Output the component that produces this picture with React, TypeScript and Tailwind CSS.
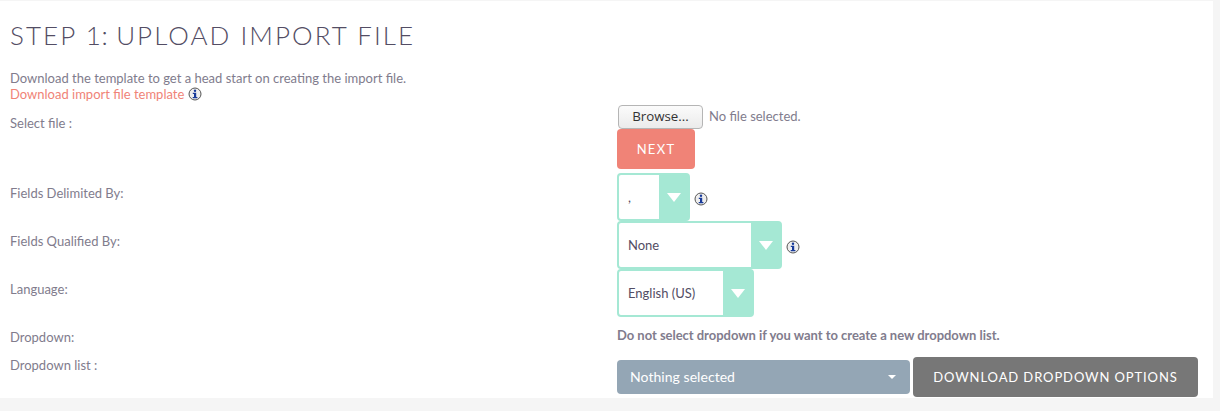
const InfoIcon = () => (
  <svg width="14" height="14" viewBox="0 0 14 14" className="shrink-0">
    <circle cx="7" cy="7" r="6" fill="#eeeeee" stroke="#555" strokeWidth="1" />
    <circle cx="7" cy="3.8" r="1.2" fill="#173a9a" />
    <path d="M4.8 5.8h3.4v4.2h1.2v1.3H4.7V10h1.3V7.1H4.8z" fill="#173a9a" />
  </svg>
);

const Arrow = ({ className }: { className: string }) => (
  <span className={`flex items-center justify-center bg-[#a5e8d4] ${className}`}>
    <span className="w-0 h-0 border-l-[7px] border-r-[7px] border-t-[9px] border-l-transparent border-r-transparent border-t-white" />
  </span>
);

const Select = ({ label, textW, arrowW }: { label: string; textW: string; arrowW: string }) => (
  <div className="flex h-[48px] rounded-[4px] border-2 border-[#a5e8d4] bg-white">
    <span className={`flex items-center pl-[9px] pt-[1px] text-[13px] text-[#534d64] ${textW}`}>{label}</span>
    <Arrow className={arrowW} />
  </div>
);

const Label = ({ children, className }: { children: string; className: string }) => (
  <div className={`w-[607px] shrink-0 text-[13px] leading-[18px] ${className}`}>{children}</div>
);

export default function App() {
  return (
    <div className="h-[411px] w-[1220px] overflow-hidden bg-[#f5f5f5] font-['Lato','sans-serif'] text-[#817c8d]">
      <div className="h-[397px] w-[1213px] bg-white pt-[1px] pl-[10px] overflow-hidden mt-[1px]">
        <h2 className="mt-[18px] text-[26px] font-light leading-[30px] tracking-[2.05px] text-[#534d64]">STEP <span className="tracking-[0.7px]">1: </span>UPLOAD IMPORT FILE</h2>
        <div className="mt-[20px] text-[13px] leading-[16px]">Download the template to get a head start on creating the import file.</div>
        <div className="flex h-[16px] items-center text-[13px] leading-[16px] text-[#f08377]">
          <span>Download import file template</span>
          <span className="ml-[4px]"><InfoIcon /></span>
        </div>
        <div className="flex">
          <Label className="pt-[12px]">Select file :</Label>
          <div className="flex flex-col items-start">
            <div className="mt-[2px] ml-[1px] flex h-[25px] items-center">
              <span className="flex h-[24px] w-[85px] items-center justify-center rounded-[4px] border border-[#b5b5b5] bg-[linear-gradient(#fbfbfb,#ebebeb)] font-['Open_Sans','sans-serif'] text-[13.3px] text-[#333]">Browse...</span>
              <span className="ml-[6px] text-[13px]">No file selected.</span>
            </div>
            <div className="flex h-[40px] w-[78px] items-center justify-center rounded-[4px] bg-[#f08377] pt-[1px] text-[13px] tracking-[1.3px] text-white">NEXT</div>
          </div>
        </div>
        <div className="mt-[4px] flex">
          <Label className="pt-[11px]">Fields Delimited By:</Label>
          <div className="flex items-center">
            <Select label="," textW="w-[40px]" arrowW="w-[29px]" />
            <span className="ml-[4px] mt-[3px]"><InfoIcon /></span>
          </div>
        </div>
        <div className="flex">
          <Label className="pt-[11px]">Fields Qualified By:</Label>
          <div className="flex items-center">
            <Select label="None" textW="w-[132px]" arrowW="w-[29px]" />
            <span className="ml-[4px] mt-[3px]"><InfoIcon /></span>
          </div>
        </div>
        <div className="flex">
          <Label className="pt-[11px]">Language:</Label>
          <Select label="English (US)" textW="w-[104px]" arrowW="w-[29px]" />
        </div>
        <div className="flex h-[40px]">
          <Label className="pt-[11px]">Dropdown:</Label>
          <div className="pt-[9px] text-[13px] font-bold leading-[18px] tracking-[-0.03px]">Do not select dropdown if you want to create a new dropdown list.</div>
        </div>
        <div className="flex">
          <Label className="-mt-[1px]">Dropdown list :</Label>
          <div className="flex items-center">
            <div className="flex h-[34px] w-[293px] items-center justify-between rounded-[4px] bg-[#94a6b5] pb-[1px] pl-[13px] pr-[14px] text-[14px] tracking-[0.05px] text-white">
              <span>Nothing selected</span>
              <span className="h-0 w-0 border-l-[4px] border-r-[4px] border-t-[4px] border-l-transparent border-r-transparent border-t-white" />
            </div>
            <div className="ml-[3px] flex h-[40px] w-[285px] items-center justify-center rounded-[4px] bg-[#777777] pt-[1px] text-[13px] tracking-[0.9px] text-white">DOWNLOAD DROPDOWN OPTIONS</div>
          </div>
        </div>
      </div>
    </div>
  );
}
